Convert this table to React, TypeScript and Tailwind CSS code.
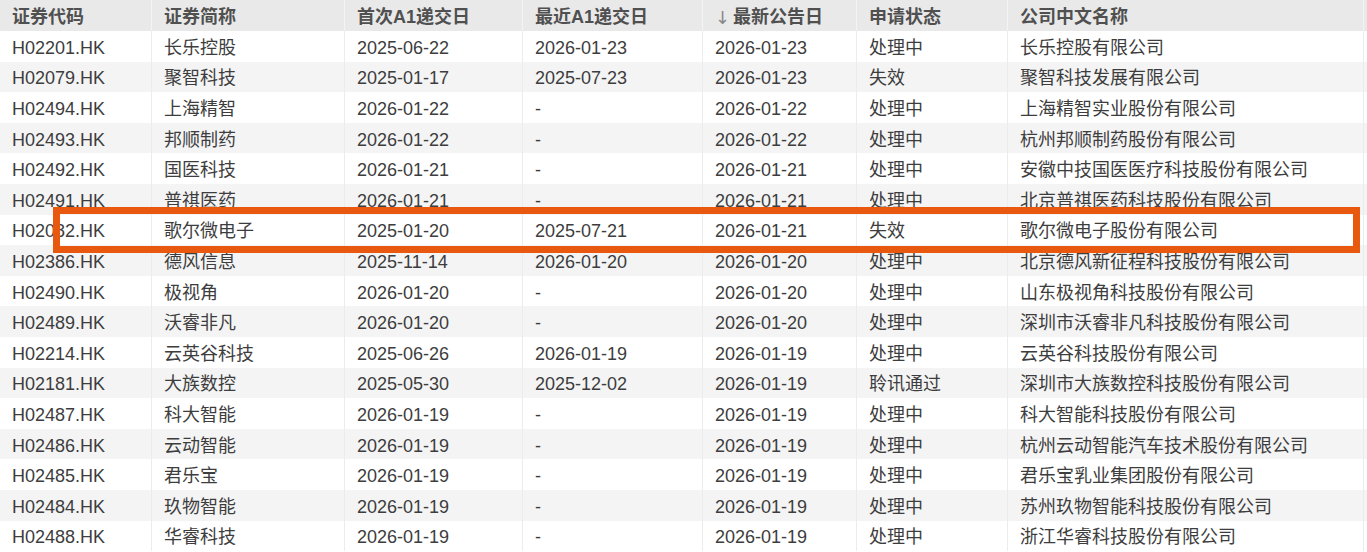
const rows = [
  ['H02201.HK', '长乐控股', '2025-06-22', '2026-01-23', '2026-01-23', '处理中', '长乐控股有限公司'],
  ['H02079.HK', '聚智科技', '2025-01-17', '2025-07-23', '2026-01-23', '失效', '聚智科技发展有限公司'],
  ['H02494.HK', '上海精智', '2026-01-22', '-', '2026-01-22', '处理中', '上海精智实业股份有限公司'],
  ['H02493.HK', '邦顺制药', '2026-01-22', '-', '2026-01-22', '处理中', '杭州邦顺制药股份有限公司'],
  ['H02492.HK', '国医科技', '2026-01-21', '-', '2026-01-21', '处理中', '安徽中技国医医疗科技股份有限公司'],
  ['H02491.HK', '普祺医药', '2026-01-21', '-', '2026-01-21', '处理中', '北京普祺医药科技股份有限公司'],
  ['H02082.HK', '歌尔微电子', '2025-01-20', '2025-07-21', '2026-01-21', '失效', '歌尔微电子股份有限公司'],
  ['H02386.HK', '德风信息', '2025-11-14', '2026-01-20', '2026-01-20', '处理中', '北京德风新征程科技股份有限公司'],
  ['H02490.HK', '极视角', '2026-01-20', '-', '2026-01-20', '处理中', '山东极视角科技股份有限公司'],
  ['H02489.HK', '沃睿非凡', '2026-01-20', '-', '2026-01-20', '处理中', '深圳市沃睿非凡科技股份有限公司'],
  ['H02214.HK', '云英谷科技', '2025-06-26', '2026-01-19', '2026-01-19', '处理中', '云英谷科技股份有限公司'],
  ['H02181.HK', '大族数控', '2025-05-30', '2025-12-02', '2026-01-19', '聆讯通过', '深圳市大族数控科技股份有限公司'],
  ['H02487.HK', '科大智能', '2026-01-19', '-', '2026-01-19', '处理中', '科大智能科技股份有限公司'],
  ['H02486.HK', '云动智能', '2026-01-19', '-', '2026-01-19', '处理中', '杭州云动智能汽车技术股份有限公司'],
  ['H02485.HK', '君乐宝', '2026-01-19', '-', '2026-01-19', '处理中', '君乐宝乳业集团股份有限公司'],
  ['H02484.HK', '玖物智能', '2026-01-19', '-', '2026-01-19', '处理中', '苏州玖物智能科技股份有限公司'],
  ['H02488.HK', '华睿科技', '2026-01-19', '-', '2026-01-19', '处理中', '浙江华睿科技股份有限公司'],
]

const headers = ['证券代码', '证券简称', '首次A1递交日', '最近A1递交日', '最新公告日', '申请状态', '公司中文名称']

const grid = 'grid grid-cols-[152px_193px_178px_180px_154px_151px_356px]'

const App = () => {
  return (
    <div
      className="relative w-[1367px] h-[552px] overflow-hidden bg-white text-[18px] text-[#3d3d3d]"
      style={{ fontFamily: '"Liberation Sans", "Noto Sans CJK SC", sans-serif' }}
    >
      <div className={`${grid} h-[31px] bg-[#e9e9ea] font-bold text-[#505050]`}>
        {headers.map((h, j) => (
          <div key={h} className="flex items-center pl-3 pt-[3px] border-r border-[#f4f4f4] whitespace-nowrap">
            {j === 4 && (
              <span className="font-normal text-[#888] mr-[3px]" style={{ fontFamily: '"DejaVu Sans", sans-serif' }}>
                ↓
              </span>
            )}
            {h}
          </div>
        ))}
      </div>
      {rows.map((r, i) => (
        <div key={r[0]} className={`${grid} h-[30.6px] ${i % 2 === 1 ? 'bg-[#f4f4f5]' : 'bg-white'}`}>
          {r.map((c, j) => (
            <div key={j} className="flex items-center pl-3 pt-[3px] border-r border-[#ececec] whitespace-nowrap leading-none">
              {c}
            </div>
          ))}
        </div>
      ))}
      <div className="absolute left-[53px] top-[207px] w-[1307px] h-[46px] border-[7px] border-[#e8590f]" />
    </div>
  )
}

export default App
